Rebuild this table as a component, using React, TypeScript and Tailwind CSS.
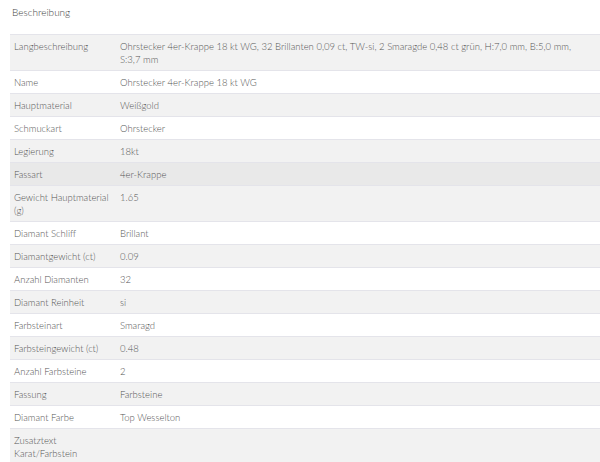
const rows: [string, string][] = [
  ["Langbeschreibung", "Ohrstecker 4er-Krappe 18 kt WG, 32 Brillanten 0,09 ct, TW-si, 2 Smaragde 0,48 ct grün, H:7,0 mm, B:5,0 mm, S:3,7 mm"],
  ["Name", "Ohrstecker 4er-Krappe 18 kt WG"],
  ["Hauptmaterial", "Weißgold"],
  ["Schmuckart", "Ohrstecker"],
  ["Legierung", "18kt"],
  ["Fassart", "4er-Krappe"],
  ["Gewicht Hauptmaterial (g)", "1.65"],
  ["Diamant Schliff", "Brillant"],
  ["Diamantgewicht (ct)", "0.09"],
  ["Anzahl Diamanten", "32"],
  ["Diamant Reinheit", "si"],
  ["Farbsteinart", "Smaragd"],
  ["Farbsteingewicht (ct)", "0.48"],
  ["Anzahl Farbsteine", "2"],
  ["Fassung", "Farbsteine"],
  ["Diamant Farbe", "Top Wesselton"],
  ["Zusatztext Karat/Farbstein", ""],
];

const App = () => {
  return (
    <div className="bg-white pl-[10px] pt-[6px] text-[#555] font-['Lato',sans-serif] font-light text-[9.5px] leading-[13px]">
      <h3 className="pl-[2px] text-[10px] leading-[13px] text-[#444]">Beschreibung</h3>

      <table className="mt-[15px] w-full border-collapse">
        <tbody>
          {rows.map(([label, value], i) => (
            <tr
              key={label}
              className={
                label === "Fassart"
                  ? "bg-[#e9e9e9] border-t border-[#e4e4ea]"
                  : i % 2 === 0
                    ? "bg-[#f2f2f2] border-t border-[#e4e4ea]"
                    : "bg-white border-t border-[#e4e4ea]"
              }
            >
              <td className="w-[110px] align-top pl-[4px] pr-[4px] pt-[5px] pb-[4px]">{label}</td>
              <td className="align-top pl-[0px] pr-[6px] pt-[5px] pb-[4px]">{value}</td>
            </tr>
          ))}
        </tbody>
      </table>
    </div>
  );
};

export default App;
